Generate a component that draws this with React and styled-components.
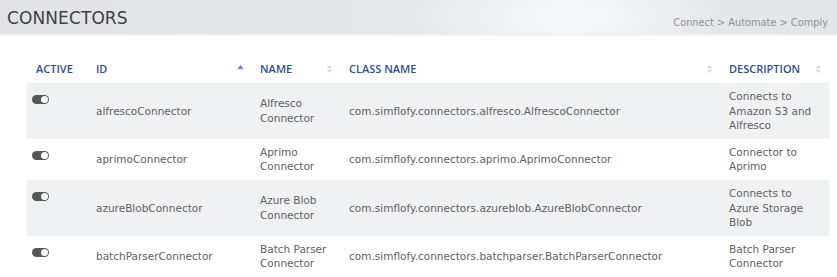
import React from 'react'
import styled, { createGlobalStyle } from 'styled-components'

const GlobalStyle = createGlobalStyle`
  html, body {
    margin: 0;
    padding: 0;
    background: #fff;
  }
  body {
    font-family: "DejaVu Sans", "Open Sans", sans-serif;
    color: #555;
  }
`

const connectors = [
  {
    id: 'alfrescoConnector',
    name: 'Alfresco Connector',
    className: 'com.simflofy.connectors.alfresco.AlfrescoConnector',
    description: 'Connects to Amazon S3 and Alfresco',
  },
  {
    id: 'aprimoConnector',
    name: 'Aprimo Connector',
    className: 'com.simflofy.connectors.aprimo.AprimoConnector',
    description: 'Connector to Aprimo',
  },
  {
    id: 'azureBlobConnector',
    name: 'Azure Blob Connector',
    className: 'com.simflofy.connectors.azureblob.AzureBlobConnector',
    description: 'Connects to Azure Storage Blob',
  },
  {
    id: 'batchParserConnector',
    name: 'Batch Parser Connector',
    className: 'com.simflofy.connectors.batchparser.BatchParserConnector',
    description: 'Batch Parser Connector',
  },
]

const columns = [
  { key: 'active', label: 'Active', width: 60, sort: null },
  { key: 'id', label: 'ID', width: 164, sort: 'asc' },
  { key: 'name', label: 'Name', width: 89, sort: 'both' },
  { key: 'className', label: 'Class Name', width: 380, sort: 'both' },
  { key: 'description', label: 'Description', width: 109, sort: 'both' },
]

const SortIcon = ({ mode }) => {
  if (!mode) return null
  if (mode === 'asc') {
    return (
      <SortSvg width="7" height="10" viewBox="0 0 7 10">
        <path d="M0.5 5 L3.5 1 L6.5 5 Z" fill="#6f78cf" />
      </SortSvg>
    )
  }
  return (
    <SortSvg width="7" height="10" viewBox="0 0 7 10">
      <path d="M0.8 4.3 L3.5 1 L6.2 4.3 Z" fill="#d6d8db" />
      <path d="M0.8 5.7 L3.5 9 L6.2 5.7 Z" fill="#d6d8db" />
    </SortSvg>
  )
}

const App = () => {
  return (
    <>
      <GlobalStyle />
      <Page>
        <TitleBar>
          <Title>CONNECTORS</Title>
          <Crumbs>Connect &gt; Automate &gt; Comply</Crumbs>
        </TitleBar>
        <Content>
          <Table>
            <colgroup>
              {columns.map(c => (
                <col key={c.key} style={{ width: c.width }} />
              ))}
            </colgroup>
            <thead>
              <tr>
                {columns.map(c => (
                  <HeadCell key={c.key}>
                    {c.label}
                    <SortIcon mode={c.sort} />
                  </HeadCell>
                ))}
              </tr>
            </thead>
            <tbody>
              {connectors.map((row, i) => (
                <Row key={row.id} $striped={i % 2 === 0}>
                  <ToggleCell>
                    <Toggle />
                  </ToggleCell>
                  <Cell>{row.id}</Cell>
                  <Cell>{row.name}</Cell>
                  <Cell>{row.className}</Cell>
                  <Cell>{row.description}</Cell>
                </Row>
              ))}
            </tbody>
          </Table>
        </Content>
      </Page>
    </>
  )
}

const Page = styled.div`
  width: 837px;
  height: 277px;
  overflow: hidden;
`

const TitleBar = styled.header`
  height: 36px;
  display: flex;
  justify-content: space-between;
  align-items: center;
  padding: 0 9px 0 7px;
  box-sizing: border-box;
  background:
    radial-gradient(ellipse 160px 60px at 570px 50%, rgba(250, 251, 252, 0.95), rgba(250, 251, 252, 0) 100%),
    linear-gradient(90deg, #e1e3e6 0%, #e5e7ea 50%, #e3e5e8 100%);
  border-bottom: 2px solid #f1f2f3;
`

const Title = styled.h1`
  margin: 0;
  font-size: 17px;
  font-weight: normal;
  color: #3f4245;
  letter-spacing: 0.1px;
  padding-top: 1px;
`

const Crumbs = styled.span`
  font-size: 9.8px;
  color: #8d9196;
  padding-top: 10px;
`

const Content = styled.main`
  padding: 21px 8px 0 27px;
`

const Table = styled.table`
  width: 802px;
  table-layout: fixed;
  border-collapse: collapse;
`

const HeadCell = styled.th`
  position: relative;
  text-align: left;
  padding: 5px 9px 8px 9px;
  line-height: 13px;
  font-family: "Open Sans", "DejaVu Sans", sans-serif;
  font-size: 11px;
  font-weight: 600;
  color: #2f4f8b;
  text-transform: uppercase;
  white-space: nowrap;
`

const SortSvg = styled.svg`
  position: absolute;
  right: 7px;
  top: 50%;
  margin-top: -6px;
`

const Row = styled.tr`
  background: ${p => (p.$striped ? '#f0f1f2' : '#fff')};
`

const Cell = styled.td`
  padding: 6px 9px;
  font-size: 10.5px;
  line-height: 14.6px;
  color: #606265;
  vertical-align: middle;
`

const ToggleCell = styled.td`
  padding: 12px 9px 0 5px;
  vertical-align: top;
`

const Toggle = styled.span`
  position: relative;
  display: block;
  width: 17px;
  height: 9px;
  border-radius: 5px;
  background: #555759;
  &::after {
    content: '';
    position: absolute;
    right: 1px;
    top: 1px;
    width: 7px;
    height: 7px;
    border-radius: 50%;
    background: #fff;
  }
`

export default App
